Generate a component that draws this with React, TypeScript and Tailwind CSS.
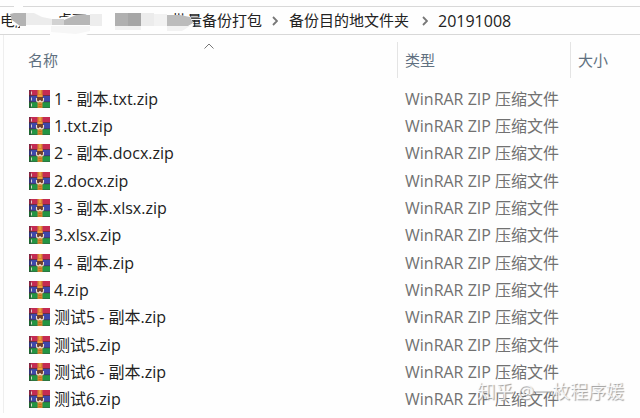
import React from "react";

const files = [
  "1 - 副本.txt.zip",
  "1.txt.zip",
  "2 - 副本.docx.zip",
  "2.docx.zip",
  "3 - 副本.xlsx.zip",
  "3.xlsx.zip",
  "4 - 副本.zip",
  "4.zip",
  "测试5 - 副本.zip",
  "测试5.zip",
  "测试6 - 副本.zip",
  "测试6.zip",
];

function ArchiveIcon() {
  return (
    <svg viewBox="0 0 21 18" className="h-[18px] w-[21px] shrink-0" aria-hidden="true">
      <rect x="0" y="0" width="21" height="18" fill="#46303f" />
      <rect x="1.500" y="0" width="19.500" height="5.300" fill="#c42b52" />
      <rect x="1.500" y="6" width="19.500" height="5.500" fill="#3d48aa" />
      <rect x="1.500" y="12.200" width="19.500" height="5.500" fill="#239544" />
      <path d="M0 0.500H1.500V5H0Z" fill="#8c2440" />
      <path d="M0 6.500H1.500V11H0Z" fill="#303579" />
      <path d="M0 12.500H1.500V17.500H0Z" fill="#1b6830" />
      <path d="M2.500 1.500V4.500M2.500 7.500V10.500M2.500 13.500V16.500" stroke="#e8dfd2" strokeWidth="0.9" />
      <rect x="8.500" y="0" width="5" height="18" fill="#d88530" />
      <path d="M10 1H12M10 3H12" stroke="#f5b65c" strokeWidth="1" />
      <path d="M9.500 14.500H12.500M9.500 16.500H12.500" stroke="#b8661c" strokeWidth="0.7" />
      <rect x="8" y="7" width="6" height="4" fill="#713f2c" />
      <path d="M7.500 8V10Q7.500 12 9.300 12Q11 12 11 10Q11 12 12.700 12Q14.500 12 14.500 10V8" fill="none" stroke="#eee0cf" strokeWidth="1.100" />
      <path d="M8.500 6H13.500" stroke="#ef9e38" strokeWidth="2" />
    </svg>
  );
}

function Chevron() {
  return (
    <svg viewBox="0 0 6 10" className="h-[10px] w-[6px] shrink-0" fill="none" stroke="#777" strokeWidth="1.800" aria-hidden="true">
      <path d="M1 1L5 5L1 9" />
    </svg>
  );
}

function Redaction() {
  return (
    <svg viewBox="0 0 200 38" className="pointer-events-none absolute left-0 top-0 h-[38px] w-[200px]" aria-hidden="true">
      <path d="M10 13L14 10V5H23V10H40L46 17L64 18L72 15L90 14V9H141L167 15L190 16L194 25L188 32L90 33L84 36H50V32H20V26L12 25L12 21Z" fill="#fefefe" />
      <path d="M10 14L14 13H26V26H20L12 20Z" fill="#b3b3b3" />
      <path d="M26 13H34L42 17L52 19V25H26Z" fill="#ececec" />
      <path d="M52 19H64V25H52Z" fill="#d2d2d2" />
      <path d="M64 20L76 15H90V25H64Z" fill="#b7b7b7" />
      <path d="M51 26H90V31L76 34L51 32Z" fill="#f6f6f6" />
      <rect x="90" y="14" width="12" height="12" fill="#ededed" />
      <rect x="115" y="13" width="13" height="13" fill="#b0b0b0" />
      <rect x="128" y="13" width="13" height="13" fill="#a6a6a6" />
      <rect x="115" y="26" width="26" height="4" fill="#f1f1f1" />
      <rect x="141" y="13" width="13" height="13" fill="#ececec" />
      <rect x="154" y="14" width="13" height="12" fill="#f2f2f2" />
      <path d="M167 15H180L190 17L193 23L188 26H167Z" fill="#bcbcbc" />
      <path d="M167 26H190L182 31H167Z" fill="#f2f2f2" />
    </svg>
  );
}

export default function App() {
  return (
    <main className="relative min-h-screen overflow-hidden bg-[#fefefe] pt-[6px] font-['Open_Sans','Noto_Sans_CJK_SC',sans-serif] text-[#222]">
      <nav aria-label="路径" className="flex h-[29px] items-center whitespace-nowrap border-y border-[#d8d8d8] text-[15px]">
        <span className="w-[57px]">电脑</span>
        <span className="w-[115px]">桌面</span>
        <span className="w-[100px]">批量备份打包</span>
        <Chevron />
        <span className="ml-[11px] w-[133px]">备份目的地文件夹</span>
        <Chevron />
        <span className="ml-[10px] text-base">20191008</span>
      </nav>
      <Redaction />
      <div className="relative ml-[3px] border-l border-[#eee]">
        <svg viewBox="0 0 10 6" className="absolute left-[200px] top-[8px] h-[6px] w-[10px]" fill="none" stroke="#777" aria-hidden="true">
          <path d="M0.500 5.500L5 1L9.500 5.500" />
        </svg>
        <table className="w-full table-fixed border-collapse text-left">
          <colgroup>
            <col className="w-[393px]" />
            <col className="w-[173px]" />
            <col />
          </colgroup>
          <thead>
            <tr className="h-[50px] text-[15px] text-[#607080]">
              <th className="p-0 font-normal"><div className="pl-[24px]">名称</div></th>
              <th className="p-0 font-normal"><div className="flex h-9 items-center border-l border-[#e4e4e4] pl-[7px]">类型</div></th>
              <th className="p-0 font-normal"><div className="flex h-9 items-center border-l border-[#e4e4e4] pl-[7px]">大小</div></th>
            </tr>
          </thead>
          <tbody>
            {files.map((name) => (
              <tr key={name} className="h-[27px] nth-[3n]:h-[28px]">
                <td className="p-0">
                  <div className="flex items-center gap-1 pl-[25px] leading-6">
                    <ArchiveIcon />
                    <span>{name}</span>
                  </div>
                </td>
                <td className="whitespace-nowrap p-0 pl-2 leading-6 text-[#717171]">WinRAR ZIP 压缩文件</td>
                <td className="p-0" />
              </tr>
            ))}
          </tbody>
        </table>
      </div>
      <div className="absolute bottom-[15px] right-4 whitespace-nowrap text-lg leading-6 text-white/80 [text-shadow:1px_1px_1px_#999]">知乎 @一枚程序媛</div>
    </main>
  );
}
